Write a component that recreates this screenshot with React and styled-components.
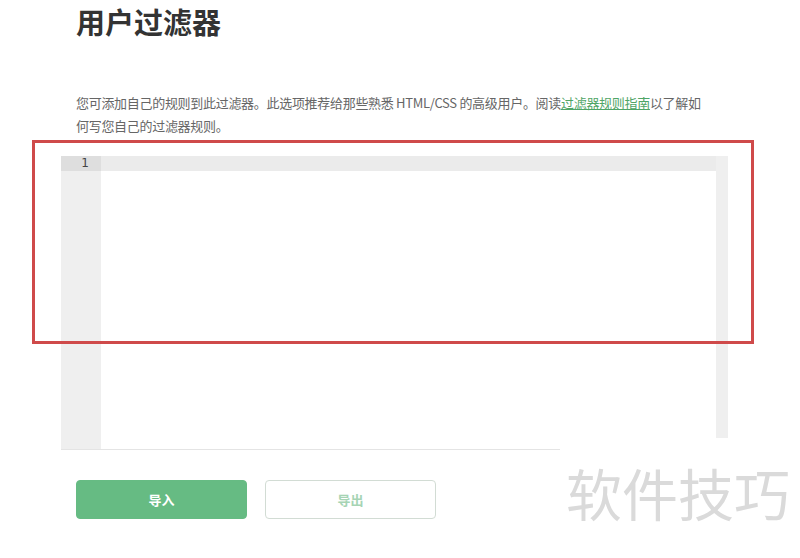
import styled, { createGlobalStyle } from "styled-components";

const GlobalStyle = createGlobalStyle`
  html, body {
    margin: 0;
    padding: 0;
    background: #fff;
  }
  body {
    font-family: "Noto Sans CJK SC", "Noto Sans", sans-serif;
  }
`;

const Page = styled.div`
  position: relative;
  width: 800px;
  height: 558px;
  overflow: hidden;
  padding-left: 76px;
  box-sizing: border-box;
`;

const Title = styled.h1`
  margin: 0;
  padding-top: 4px;
  font-size: 29px;
  line-height: 35px;
  font-weight: 700;
  color: #333;
`;

const Intro = styled.p`
  margin: 52px 0 0;
  font-size: 13px;
  line-height: 23px;
  letter-spacing: -0.3px;
  color: #666;
`;

const Link = styled.a`
  color: #4fa566;
  text-decoration: underline;
`;

const Editor = styled.div`
  display: flex;
  margin: 19px 0 0 -15px;
  width: 667px;
  height: 293px;
  border-bottom: 1px solid #e4e4e4;
`;

const Gutter = styled.div`
  width: 40px;
  background: #efefef;
`;

const LineNumber = styled.div`
  height: 15px;
  line-height: 15px;
  padding-right: 12px;
  text-align: right;
  font-family: "DejaVu Sans", sans-serif;
  font-size: 12px;
  color: #444;
  background: #dedede;
`;

const Code = styled.div`
  flex: 1;
  background: #fff;
`;

const ActiveLine = styled.div`
  height: 15px;
  background: #ebebeb;
`;

const Scrollbar = styled.div`
  width: 12px;
  background: #efefef;
`;

const Actions = styled.div`
  display: flex;
  gap: 18px;
  margin-top: 30px;
`;

const Button = styled.button`
  width: 171px;
  height: 39px;
  border-radius: 4px;
  font-family: inherit;
  font-size: 13px;
  font-weight: 700;
  cursor: pointer;
  border: 1px solid ${(p) => (p.$primary ? "#66bb83" : "#d2dcd4")};
  background: ${(p) => (p.$primary ? "#66bb83" : "#fff")};
  color: ${(p) => (p.$primary ? "#fff" : "#a6d4b4")};
`;

const Highlight = styled.div`
  position: absolute;
  left: 32px;
  top: 140px;
  width: 722px;
  height: 204px;
  box-sizing: border-box;
  border: 3px solid #cf4a4a;
  pointer-events: none;
`;

const Watermark = styled.div`
  position: absolute;
  left: 560px;
  top: 438px;
  width: 240px;
  height: 120px;
  background: #fff;
  padding: 22px 0 0 6px;
  box-sizing: border-box;
  font-size: 56px;
  line-height: 64px;
  color: #dadada;
  white-space: nowrap;
`;

export default function App() {
  return (
    <>
      <GlobalStyle />
      <Page>
        <Title>用户过滤器</Title>
        <Intro>
          您可添加自己的规则到此过滤器。此选项推荐给那些熟悉 HTML/CSS
          的高级用户。阅读<Link href="#">过滤器规则指南</Link>以了解如
          <br />
          何写您自己的过滤器规则。
        </Intro>
        <Editor>
          <Gutter>
            <LineNumber>1</LineNumber>
          </Gutter>
          <Code>
            <ActiveLine />
          </Code>
          <Scrollbar />
        </Editor>
        <Actions>
          <Button $primary>导入</Button>
          <Button>导出</Button>
        </Actions>
        <Highlight />
        <Watermark>软件技巧</Watermark>
      </Page>
    </>
  );
}
